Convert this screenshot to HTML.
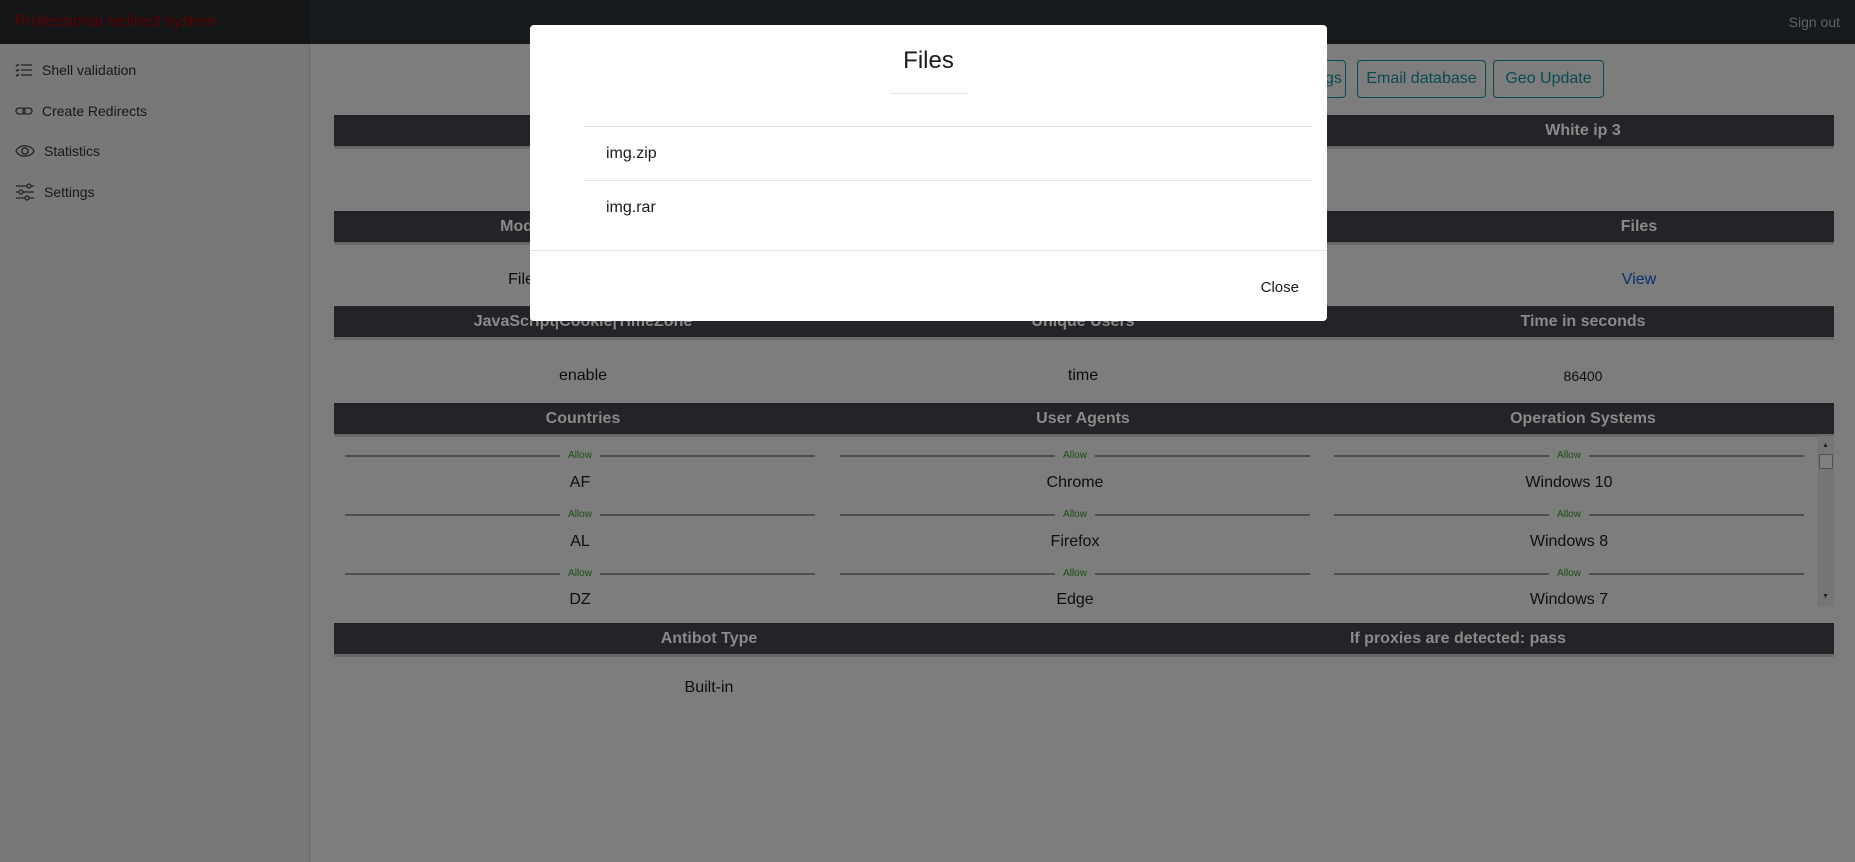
<!DOCTYPE html>
<html><head><meta charset="utf-8"><style>
*{box-sizing:border-box;margin:0;padding:0}
body{width:1855px;height:862px;overflow:hidden;background:#7d7d7d;font-family:"Liberation Sans",sans-serif;position:relative;color:#111}
.a{position:absolute}
.nav{left:0;top:0;width:1855px;height:44px;background:#181b1e}
.brand{left:0;top:0;width:310px;height:44px;background:#131517;color:#5c0000;font-size:16px;line-height:44px;padding-left:15px}
.side{left:0;top:44px;width:310px;height:818px;background:#787878;border-right:1px solid #6a6a6a}
.si{left:15px;font-size:14px;color:#181818;display:flex;align-items:center;gap:9px}
.bar{left:334px;width:1500px;background:#222427;border-bottom:3px solid #66686a;color:#8a8a8a;font-weight:bold;font-size:16px}
.bar span,.row span{position:absolute;transform:translateX(-50%);white-space:nowrap}
.row{left:334px;width:1500px;font-size:16px;color:#0e0e0e}
.btn{top:60px;height:38px;border:1px solid #0a4a52;border-radius:4px;color:#0a4a52;font-size:16px;line-height:36px;text-align:center}
.ln{height:2px;background:#4e4e4e}
.gap{width:40px;height:12px;background:#7d7d7d}
.allow{font-size:10px;color:#1a5012;transform:translateX(-50%)}
.it{font-size:16px;transform:translateX(-50%);white-space:nowrap;color:#0e0e0e}
.modal{left:530px;top:25px;width:797px;height:296px;background:#fff;border-radius:4px}
</style></head><body>
<div class="a nav"></div>
<div class="a brand">Professional redirect system</div>
<div class="a" style="right:15px;top:0;line-height:44px;font-size:14px;color:#5e6266">Sign out</div>
<div class="a side"></div>
<div class="a si" style="top:62px"><svg width="18" height="16" viewBox="0 0 18 16" fill="none" stroke="#222" stroke-width="1.3"><path d="M1 3l1 1 2-2M1 8l1 1 2-2M1 13l1 1 2-2M6 3h11M6 8h11M6 13h11"/></svg>Shell validation</div>
<div class="a si" style="top:103px"><svg width="18" height="12" viewBox="0 0 18 12" fill="none" stroke="#222" stroke-width="1.3"><rect x="1" y="3" width="9" height="6" rx="3"/><rect x="8" y="3" width="9" height="6" rx="3"/></svg>Create Redirects</div>
<div class="a si" style="top:143px"><svg width="20" height="14" viewBox="0 0 20 14" fill="none" stroke="#222" stroke-width="1.3"><path d="M1 7c3-7 15-7 18 0c-3 7-15 7-18 0z"/><circle cx="10" cy="7" r="3.2"/></svg>Statistics</div>
<div class="a si" style="top:183px"><svg width="20" height="18" viewBox="0 0 20 18" fill="none" stroke="#222" stroke-width="1.3"><path d="M1 3h11M16 3h3M1 9h3M8 9h11M1 15h9M14 15h5"/><circle cx="14" cy="3" r="2"/><circle cx="6" cy="9" r="2"/><circle cx="12" cy="15" r="2"/></svg>Settings</div>

<div class="a btn" style="left:1280px;width:66px">Settings</div>
<div class="a btn" style="left:1357px;width:129px">Email database</div>
<div class="a btn" style="left:1493px;width:111px">Geo Update</div>

<div class="a bar" style="top:115px;height:34px;line-height:32px"><span style="left:249px">White ip 1</span><span style="left:749px">White ip 2</span><span style="left:1249px">White ip 3</span></div>
<div class="a bar" style="top:211px;height:34px;line-height:32px"><span style="left:187px">Mode</span><span style="left:562px">Type</span><span style="left:937px">Type</span><span style="left:1305px">Files</span></div>
<div class="a row" style="top:271px"><span style="left:187px">File</span><span style="left:937px">Download</span><span style="left:1305px;color:#0a3070">View</span></div>
<div class="a bar" style="top:306px;height:34px;line-height:32px"><span style="left:249px">JavaScript|Cookie|TimeZone</span><span style="left:749px">Unique Users</span><span style="left:1249px">Time in seconds</span></div>
<div class="a row" style="top:367px"><span style="left:249px">enable</span><span style="left:749px">time</span><span style="left:1249px;font-size:14px;top:1px">86400</span></div>
<div class="a bar" style="top:403px;height:34px;line-height:32px"><span style="left:249px">Countries</span><span style="left:749px">User Agents</span><span style="left:1249px">Operation Systems</span></div>

<div class="a" style="left:1818px;top:436px;width:16px;height:170px;background:#767676;border-left:1px solid #707070"></div>
<div class="a" style="left:1819px;top:454px;width:14px;height:15px;border:1px solid #505050;border-radius:2px;background:#808080"></div>
<div class="a" style="left:1822px;top:442px;font-size:7px;color:#222">▲</div>
<div class="a" style="left:1822px;top:593px;font-size:7px;color:#222">▼</div>

<div class="a ln" style="left:345px;top:455px;width:470px"></div>
<div class="a ln" style="left:345px;top:514px;width:470px"></div>
<div class="a ln" style="left:345px;top:573px;width:470px"></div>
<div class="a ln" style="left:840px;top:455px;width:470px"></div>
<div class="a ln" style="left:840px;top:514px;width:470px"></div>
<div class="a ln" style="left:840px;top:573px;width:470px"></div>
<div class="a ln" style="left:1334px;top:455px;width:470px"></div>
<div class="a ln" style="left:1334px;top:514px;width:470px"></div>
<div class="a ln" style="left:1334px;top:573px;width:470px"></div>
<div class="a gap" style="left:560px;top:450px"></div>
<div class="a gap" style="left:560px;top:509px"></div>
<div class="a gap" style="left:560px;top:568px"></div>
<div class="a gap" style="left:1055px;top:450px"></div>
<div class="a gap" style="left:1055px;top:509px"></div>
<div class="a gap" style="left:1055px;top:568px"></div>
<div class="a gap" style="left:1549px;top:450px"></div>
<div class="a gap" style="left:1549px;top:509px"></div>
<div class="a gap" style="left:1549px;top:568px"></div>
<div class="a allow" style="left:580px;top:450px">Allow</div>
<div class="a allow" style="left:580px;top:509px">Allow</div>
<div class="a allow" style="left:580px;top:568px">Allow</div>
<div class="a allow" style="left:1075px;top:450px">Allow</div>
<div class="a allow" style="left:1075px;top:509px">Allow</div>
<div class="a allow" style="left:1075px;top:568px">Allow</div>
<div class="a allow" style="left:1569px;top:450px">Allow</div>
<div class="a allow" style="left:1569px;top:509px">Allow</div>
<div class="a allow" style="left:1569px;top:568px">Allow</div>
<div class="a it" style="left:580px;top:474px">AF</div>
<div class="a it" style="left:580px;top:533px">AL</div>
<div class="a it" style="left:580px;top:591px">DZ</div>
<div class="a it" style="left:1075px;top:474px">Chrome</div>
<div class="a it" style="left:1075px;top:533px">Firefox</div>
<div class="a it" style="left:1075px;top:591px">Edge</div>
<div class="a it" style="left:1569px;top:474px">Windows 10</div>
<div class="a it" style="left:1569px;top:533px">Windows 8</div>
<div class="a it" style="left:1569px;top:591px">Windows 7</div>

<div class="a bar" style="top:623px;height:34px;line-height:32px"><span style="left:375px">Antibot Type</span><span style="left:1124px">If proxies are detected: pass</span></div>
<div class="a row" style="top:679px"><span style="left:375px">Built-in</span></div>

<div class="a modal">
  <div class="a" style="left:0;width:797px;top:22px;text-align:center;font-size:24px;color:#1a1a1a">Files</div>
  <div class="a" style="left:360px;top:68px;width:78px;height:1px;background:#e3e3e3"></div>
  <div class="a" style="left:54px;top:101px;width:728px;height:1px;background:#e3e3e3"></div>
  <div class="a" style="left:54px;top:155px;width:728px;height:1px;background:#e3e3e3"></div>
  <div class="a" style="left:76px;top:120px;font-size:16px;color:#1a1a1a">img.zip</div>
  <div class="a" style="left:76px;top:174px;font-size:16px;color:#1a1a1a">img.rar</div>
  <div class="a" style="left:0;top:225px;width:797px;height:1px;background:#e3e3e3"></div>
  <div class="a" style="right:28px;top:254px;font-size:15px;color:#1a1a1a">Close</div>
</div>
</body></html>
